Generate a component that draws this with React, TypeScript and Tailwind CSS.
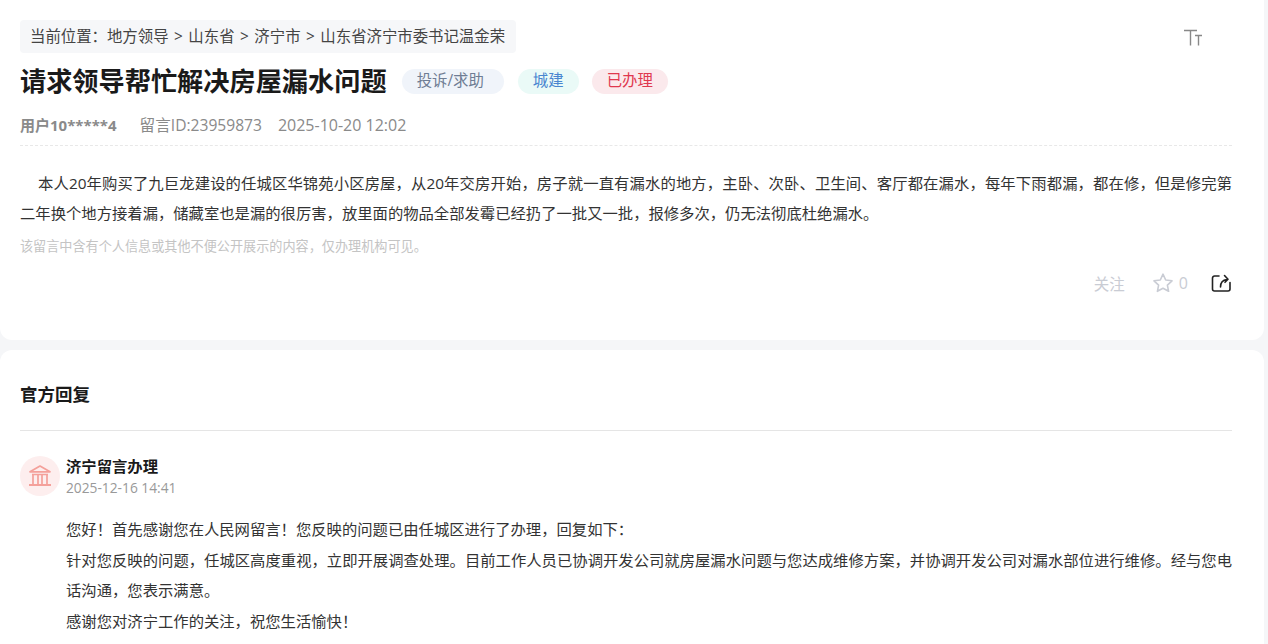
const font = { fontFamily: '"Open Sans", "Noto Sans CJK SC", sans-serif' };

function FontSizeIcon() {
  return (
    <svg width="20" height="18" viewBox="0 0 20 18" fill="none" stroke="#888" strokeWidth="1.4">
      <path d="M1 2.500h13M7.500 2.500v15M12 7.500h7M15.500 7.500v10" />
    </svg>
  );
}

function StarIcon() {
  return (
    <svg width="20" height="20" viewBox="0 0 20 20" fill="none" stroke="#c9ccd4" strokeWidth="1.6" strokeLinejoin="round">
      <path d="M10 1.200l2.700 5.800 6.300.8-4.600 4.300 1.200 6.200L10 15.200l-5.600 3.100 1.200-6.200L1 7.800l6.300-.8z" />
    </svg>
  );
}

function ShareIcon() {
  return (
    <svg width="20" height="20" viewBox="0 0 20 20" fill="none" stroke="#222" strokeWidth="1.6" strokeLinecap="round" strokeLinejoin="round">
      <path d="M8 3H3.500a2 2 0 0 0-2 2v11a2 2 0 0 0 2 2H17a2 2 0 0 0 2-2V9.500" />
      <path d="M9.500 14c0-4 1.500-7 6.500-7.500M13.500 2.500L17 6.300l-3 3" />
    </svg>
  );
}

function BankIcon() {
  return (
    <svg width="24" height="22" viewBox="0 0 24 22" fill="none" stroke="#f4a09a" strokeWidth="1.700" className="-mt-[1px]">
      <path d="M2 6.800L12 1l10 5.800z" strokeLinejoin="round" />
      <path d="M4 9.500h16M5 9.500v9.500M10 9.500v9.500M14 9.500v9.500M19 9.500v9.500" />
      <path d="M1 20h22" strokeWidth="2" />
    </svg>
  );
}

function Sep() {
  return <span className="mx-[5.500px]">&gt;</span>;
}

export default function App() {
  return (
    <div className="flex h-[644px] w-[1268px] flex-col overflow-hidden bg-[#f5f6f8] pr-1" style={font}>
      <section className="h-[340px] shrink-0 rounded-b-xl bg-white pt-5 pr-8 pl-5">
        <div className="flex items-start justify-between">
          <div className="flex h-[33px] items-center rounded-sm bg-[#f6f7f9] pr-[11px] pl-[10px] text-[15.400px] text-[#444]">
            当前位置：地方领导
            <Sep />
            山东省
            <Sep />
            济宁市
            <Sep />
            山东省济宁市委书记温金荣
          </div>
          <div className="mt-2 mr-[29px]">
            <FontSizeIcon />
          </div>
        </div>

        <div className="mt-[10px] flex items-center">
          <h1 className="text-[26.200px] leading-[36px] font-bold text-[#1a1a1a]">请求领导帮忙解决房屋漏水问题</h1>
          <span className="ml-[15px] flex h-[25px] items-center rounded-full bg-[#f0f4fa] pr-5 pl-[15px] text-[15.400px] text-[#6f7d94]">投诉/求助</span>
          <span className="ml-[14px] flex h-[25px] items-center rounded-full bg-[#eafaf7] px-[15px] text-[15.400px] text-[#4a86d0]">城建</span>
          <span className="ml-[13px] flex h-[25px] items-center rounded-full bg-[#fbe9ec] px-[15px] text-[15.400px] text-[#e0384f]">已办理</span>
        </div>

        <div className="mt-[15px] flex items-center border-b border-dashed border-[#e8e8e8] pb-[9px] text-base leading-[22px] text-[#8a8a8a]">
          <span className="text-[15px] font-bold">用户10*****4</span>
          <span className="ml-[23px] text-[15.600px]">留言ID:23959873</span>
          <span className="ml-4">2025-10-20 12:02</span>
        </div>

        <p className="mt-[22px] indent-[18px] text-justify text-[15.330px] leading-[30px] text-[#333]">
          本人20年购买了九巨龙建设的任城区华锦苑小区房屋，从20年交房开始，房子就一直有漏水的地方，主卧、次卧、卫生间、客厅都在漏水，每年下雨都漏，都在修，但是修完第二年换个地方接着漏，储藏室也是漏的很厉害，放里面的物品全部发霉已经扔了一批又一批，报修多次，仍无法彻底杜绝漏水。
        </p>
        <p className="mt-[8px] text-[13.130px] leading-5 text-[#c4c4c4]">该留言中含有个人信息或其他不便公开展示的内容，仅办理机构可见。</p>

        <div className="mt-[13px] flex items-center justify-end text-[15.500px] text-[#c9ccd4]">
          <span className="mt-1">关注</span>
          <span className="ml-7">
            <StarIcon />
          </span>
          <span className="ml-[6px] text-base">0</span>
          <span className="mr-px ml-[23px]">
            <ShareIcon />
          </span>
        </div>
      </section>

      <section className="mt-[10px] flex-1 rounded-t-xl bg-white pt-[33px] pr-8 pl-5">
        <h2 className="border-b border-[#e5e5e5] pb-[25px] text-[17.500px] leading-[22px] font-bold text-[#1a1a1a]">官方回复</h2>

        <div className="mt-[24px] flex items-center gap-[6px]">
          <div className="flex size-10 items-center justify-center rounded-full bg-[#fdeeee]">
            <BankIcon />
          </div>
          <div>
            <div className="text-[15.330px] leading-[22px] font-bold text-[#1a1a1a]">济宁留言办理</div>
            <div className="mt-[2px] text-[13.750px] leading-[18px] text-[#999]">2025-12-16 14:41</div>
          </div>
        </div>

        <div className="mt-[17px] pl-[46px] text-justify text-[15.330px] leading-[30.500px] text-[#333]">
          <p>您好！首先感谢您在人民网留言！您反映的问题已由任城区进行了办理，回复如下：</p>
          <p>针对您反映的问题，任城区高度重视，立即开展调查处理。目前工作人员已协调开发公司就房屋漏水问题与您达成维修方案，并协调开发公司对漏水部位进行维修。经与您电话沟通，您表示满意。</p>
          <p>感谢您对济宁工作的关注，祝您生活愉快！</p>
        </div>
      </section>
    </div>
  );
}
